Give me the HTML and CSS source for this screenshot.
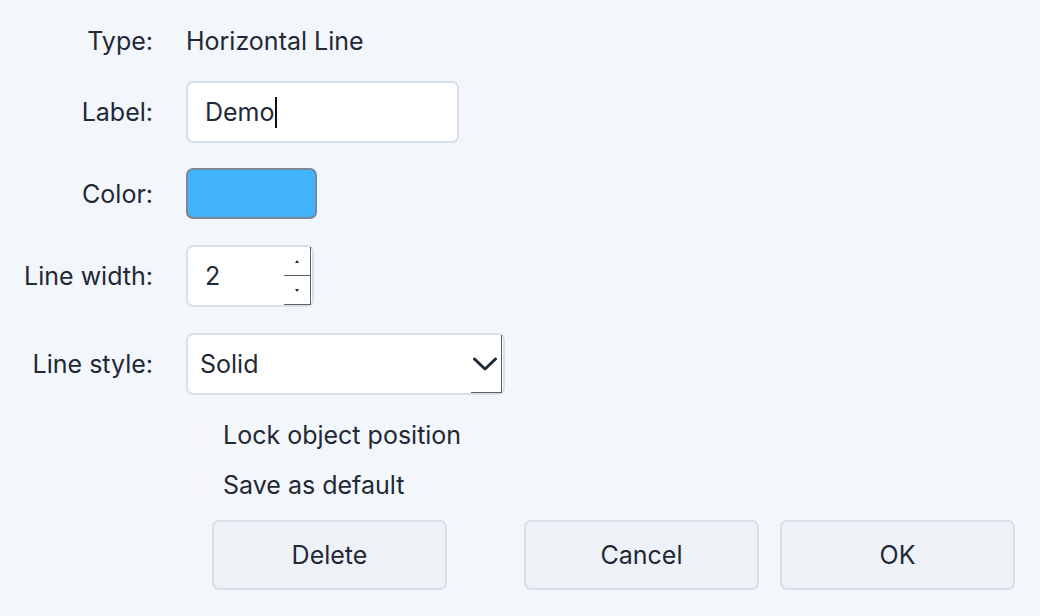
FILE: index.html
```html
<!DOCTYPE html>
<html lang="en">
<head>
<meta charset="utf-8">
<title>Line properties</title>
<link rel="stylesheet" href="styles.css">
</head>
<body>
<div class="dialog">
  <div class="row row-type">
    <div class="lbl">Type:</div>
    <div class="val">Horizontal Line</div>
  </div>
  <div class="row row-label">
    <div class="lbl">Label:</div>
    <div class="field text-field"><span>Demo</span><span class="caret"></span></div>
  </div>
  <div class="row row-color">
    <div class="lbl">Color:</div>
    <div class="swatch"></div>
  </div>
  <div class="row row-width">
    <div class="lbl">Line width:</div>
    <div class="field num-field">
      <span class="num">2</span>
      <div class="spin">
        <div class="spin-btn"><span class="tri tri-up"></span></div>
        <div class="spin-btn"><span class="tri tri-down"></span></div>
      </div>
    </div>
  </div>
  <div class="row row-style">
    <div class="lbl">Line style:</div>
    <div class="field select">
      <span class="sel-text">Solid</span>
      <div class="drop">
        <svg width="24" height="14" viewBox="0 0 24 14"><path d="M1.5 2 L12 12 L22.5 2" fill="none" stroke="#1f2937" stroke-width="3" stroke-linecap="round" stroke-linejoin="round"/></svg>
      </div>
    </div>
  </div>
  <div class="checks">
    <label class="check"><span class="box"></span><span>Lock object position</span></label>
    <label class="check"><span class="box"></span><span>Save as default</span></label>
  </div>
  <div class="buttons">
    <button class="btn btn-delete">Delete</button>
    <button class="btn btn-cancel">Cancel</button>
    <button class="btn btn-ok">OK</button>
  </div>
</div>
</body>
</html>
```

FILE: styles.css
```css
html, body {
  margin: 0;
  padding: 0;
  background: #f3f6fa;
}
body {
  font-family: Inter, "Noto Sans", "Liberation Sans", sans-serif;
  font-size: 25px;
  color: #1f2937;
  width: 1040px;
  height: 616px;
  overflow: hidden;
}
.dialog {
  padding-top: 18px;
}
.row {
  display: flex;
  align-items: center;
  gap: 33px;
}
.lbl {
  width: 153px;
  flex: none;
  text-align: right;
}
.row-type { height: 46px; }
.row-label { margin-top: 17px; }
.row-color { margin-top: 25px; }
.row-width { margin-top: 26px; }
.row-style { margin-top: 26px; }

.field {
  box-sizing: border-box;
  background: #fff;
  border: 2px solid #d9dfe9;
  border-radius: 7px;
  height: 62px;
  display: flex;
  align-items: center;
}
.text-field {
  width: 273px;
  padding-left: 17px;
}
.caret {
  display: inline-block;
  width: 2px;
  height: 31px;
  background: #111;
  margin-left: 0;
}
.swatch {
  box-sizing: border-box;
  width: 131px;
  height: 51px;
  background: #42b4fe;
  border: 2px solid #7d8795;
  border-radius: 7px;
}
.num-field {
  width: 128px;
  padding-left: 17px;
  padding-right: 1px;
}
.num { flex: 1; }
.spin {
  align-self: stretch;
  width: 26px;
  display: flex;
  flex-direction: column;
  border-right: 1.5px solid #5b6068;
}
.spin-btn {
  flex: 1;
  display: flex;
  align-items: center;
  justify-content: center;
  border-bottom: 1.5px solid #5b6068;
}
.tri {
  width: 0;
  height: 0;
  border-left: 2px solid transparent;
  border-right: 2px solid transparent;
}
.tri-up { border-bottom: 3px solid #1f2937; }
.tri-down { border-top: 3px solid #1f2937; }

.select {
  width: 319px;
  padding-left: 12px;
  padding-right: 1px;
}
.sel-text { flex: 1; }
.drop {
  align-self: stretch;
  width: 31px;
  display: flex;
  align-items: center;
  justify-content: center;
  border-right: 1.5px solid #5b6068;
  border-bottom: 1.5px solid #5b6068;
  box-sizing: border-box;
  padding-right: 2px;
}

.checks {
  margin-top: 15px;
  padding-left: 182px;
  display: flex;
  flex-direction: column;
}
.check {
  height: 50px;
  display: flex;
  align-items: center;
  gap: 10px;
}
.box {
  box-sizing: border-box;
  width: 31px;
  height: 31px;
  border-radius: 50%;
  background: #f5f7fa;
  border: 1px solid #f0f3f7;
}

.buttons {
  margin-top: 10px;
  display: flex;
  padding-left: 212px;
  padding-right: 25px;
  gap: 21px;
}
.btn {
  box-sizing: border-box;
  width: 235px;
  height: 70px;
  background: #eef2f7;
  border: 2px solid #d9dfe9;
  border-radius: 7px;
  font-family: inherit;
  font-size: 25px;
  color: #1f2937;
  padding: 0;
}
.btn-cancel { margin-left: auto; }
```
